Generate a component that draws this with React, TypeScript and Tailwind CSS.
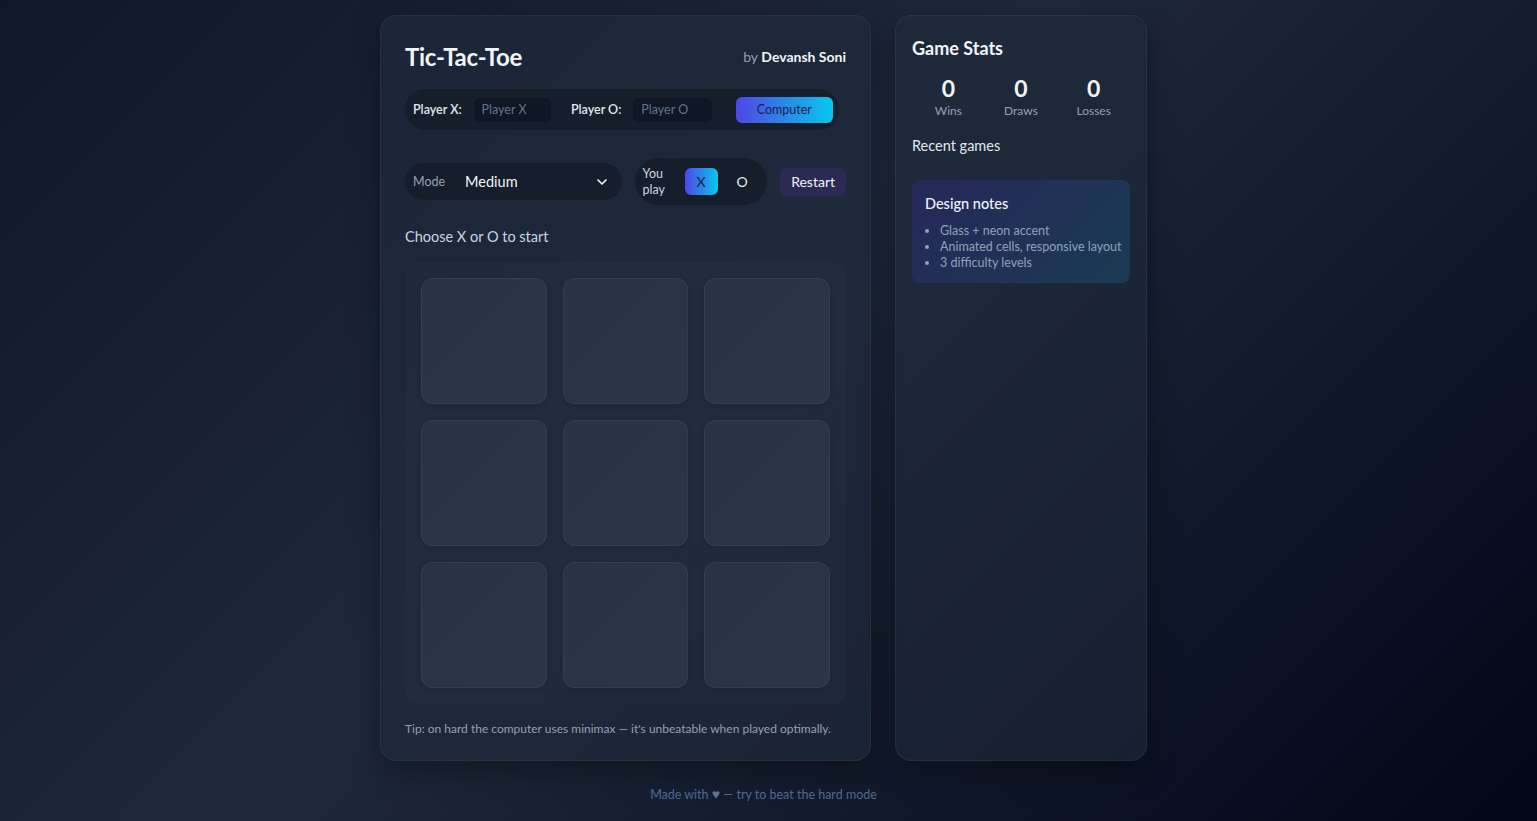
import { ChevronDown } from 'lucide-react'

const cells = Array.from({ length: 9 })

function Stat({ value, label }: { value: number; label: string }) {
  return (
    <div className="flex flex-col items-center">
      <span className="text-[23px] font-bold leading-[28px] text-slate-100">{value}</span>
      <span className="mt-[1px] text-[12px] leading-4 text-slate-400">{label}</span>
    </div>
  )
}

export default function App() {
  return (
    <div
      className="min-h-screen w-full bg-[linear-gradient(135deg,#0f172a_0%,#1e293b_45%,#020617_100%)] text-slate-100"
      style={{ fontFamily: 'Lato, "Open Sans", sans-serif' }}
    >
      <div className="flex justify-center gap-[24px] pt-[15px] pr-[10px]">
        {/* Main game card */}
        <div className="flex h-[746px] w-[491px] flex-col rounded-2xl border border-white/5 bg-[#1e293b]/70 px-6 pt-[25px] shadow-[0_10px_30px_rgba(0,0,0,0.35)]">
          <div className="flex items-center justify-between">
            <h1 className="text-[24px] font-bold leading-8 tracking-[-0.3px] text-slate-100">Tic-Tac-Toe</h1>
            <p className="mt-[-2px] text-[14px] text-slate-400">
              by <span className="font-bold text-slate-100">Devansh Soni</span>
            </p>
          </div>

          {/* Players */}
          <div className="mt-[16px] flex h-[41px] w-[434px] items-center whitespace-nowrap rounded-full bg-[#161e2c] pl-2 pr-[6px] text-[12.5px]">
            <span className="pt-[2px] font-semibold text-slate-200">Player X:</span>
            <div className="ml-[12px] flex h-6 w-[79px] items-center rounded-md bg-[#0f1624] px-2 pt-[2px] text-slate-500">Player X</div>
            <span className="ml-5 pt-[2px] font-semibold text-slate-200">Player O:</span>
            <div className="ml-[12px] flex h-6 w-[80px] items-center rounded-md bg-[#0f1624] px-2 pt-[2px] text-slate-500">Player O</div>
            <button className="ml-6 h-[26px] w-[100px] rounded-md bg-[linear-gradient(90deg,#4f46e5,#06c8ee)] pt-[2px] text-[12.5px] text-[#1e1b4b]">
              Computer
            </button>
          </div>

          {/* Mode row */}
          <div className="mt-7 flex items-center">
            <div className="flex h-[37px] w-[217px] items-center rounded-full bg-[#161e2c] pl-2 pr-[12px]">
              <span className="pt-[2px] text-[12.5px] text-slate-400">Mode</span>
              <span className="ml-5 text-[14.5px] text-slate-100">Medium</span>
              <ChevronDown className="ml-auto h-4 w-4 text-slate-100" strokeWidth={2.5} />
            </div>
            <div className="ml-[13px] flex h-[47px] w-[133px] items-center rounded-full bg-[#161e2c] pl-2">
              <span className="w-[34px] text-[12.5px] leading-4 text-slate-300">You play</span>
              <button className="ml-2 h-[27px] w-[33px] rounded-md bg-[linear-gradient(90deg,#4f46e5,#06c8ee)] text-[14px] text-[#1e1b4b]">
                X
              </button>
              <button className="ml-2 h-[27px] w-[33px] rounded-md text-[14px] text-slate-200">O</button>
            </div>
            <button className="ml-[13px] h-[28px] w-[66px] rounded-md bg-[#2a2a52] text-[14px] text-slate-100">Restart</button>
          </div>

          <p className="mt-[21px] text-[14.5px] text-slate-300">Choose X or O to start</p>

          {/* Board */}
          <div className="mt-[14px] grid w-[441px] grid-cols-3 gap-4 rounded-xl bg-[#253045]/40 p-4">
            {cells.map((_, i) => (
              <div
                key={i}
                className="h-[126px] rounded-xl border border-white/[0.05] bg-[linear-gradient(135deg,#283347,#2a3548)] shadow-[0_2px_6px_rgba(0,0,0,0.12)]"
              />
            ))}
          </div>

          <p className="mt-[16px] whitespace-nowrap text-[12px] text-slate-400">
            Tip: on hard the computer uses minimax — it&apos;s unbeatable when played optimally.
          </p>
        </div>

        {/* Stats card */}
        <div className="h-[746px] w-[252px] rounded-2xl border border-white/5 bg-[#1e293b]/60 px-[16px] pt-[20px] shadow-[0_10px_30px_rgba(0,0,0,0.35)]">
          <h2 className="text-[18px] font-bold leading-6 text-slate-100">Game Stats</h2>
          <div className="mt-[14px] grid grid-cols-3">
            <Stat value={0} label="Wins" />
            <Stat value={0} label="Draws" />
            <Stat value={0} label="Losses" />
          </div>
          <p className="mt-[16px] text-[14.5px] text-slate-200">Recent games</p>
          <div className="mt-[23px] rounded-lg bg-[linear-gradient(135deg,#25285a,#1b3a52)] px-[13px] pt-[13px] pb-[12px]">
            <p className="text-[14.5px] font-medium text-slate-100">Design notes</p>
            <ul className="mt-[8px] list-disc whitespace-nowrap pl-[15px] text-[12.5px] leading-4 text-slate-400 marker:text-slate-400">
              <li>Glass + neon accent</li>
              <li>Animated cells, responsive layout</li>
              <li>3 difficulty levels</li>
            </ul>
          </div>
        </div>
      </div>

      <p className="mt-[24px] pr-[10px] text-center text-[12.5px] leading-5 text-[#4c6a93]">
        Made with <span className="text-[14px] leading-none text-[#5f7394]">♥</span> — try to beat the hard mode
      </p>
    </div>
  )
}
